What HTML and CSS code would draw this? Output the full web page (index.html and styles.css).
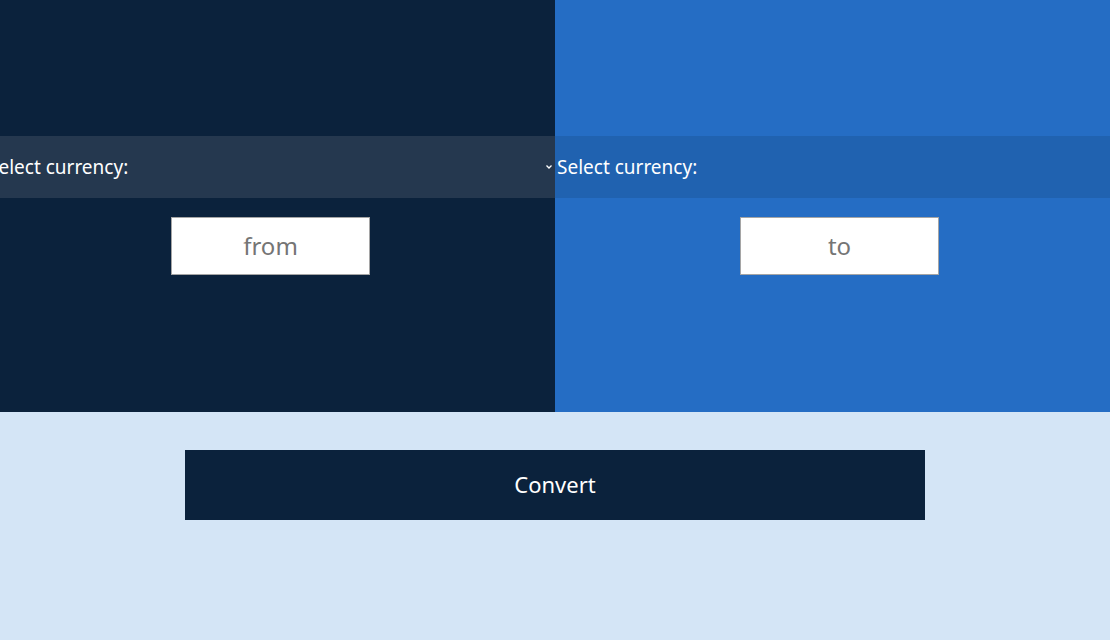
FILE: index.html
```html
<!DOCTYPE html>
<html lang="en">
<head>
  <meta charset="utf-8">
  <title>Currency converter</title>
  <link rel="stylesheet" href="styles.css">
</head>
<body>
  <form class="converter">
    <div class="panels">
      <section class="panel panel-from">
        <div class="field field-from">
          <select class="currency" aria-label="Source currency">
            <option>Select currency:</option>
          </select>
          <svg class="chevron" viewBox="0 0 6 4" aria-hidden="true"><path d="M.5.5 3 3 5.5.5"/></svg>
        </div>
        <input class="amount" type="text" placeholder="from" aria-label="Amount from">
      </section>
      <section class="panel panel-to">
        <div class="field field-to">
          <select class="currency" aria-label="Target currency">
            <option>Select currency:</option>
          </select>
          <svg class="chevron" viewBox="0 0 6 4" aria-hidden="true"><path d="M.5.5 3 3 5.5.5"/></svg>
        </div>
        <input class="amount" type="text" placeholder="to" aria-label="Amount to">
      </section>
    </div>
    <div class="actions">
      <button class="convert" type="button">Convert</button>
    </div>
  </form>
</body>
</html>
```
FILE: styles.css
```css
* {
  box-sizing: border-box;
}

body {
  margin: 0;
  background: #d4e5f6;
  font-family: "Trebuchet MS", "Noto Sans", sans-serif;
}

.converter {
  display: flex;
  flex-direction: column;
  min-height: 100vh;
}

.panels {
  display: flex;
  justify-content: center;
  min-height: 412px;
  overflow: hidden;
}

.panel {
  display: flex;
  flex: 0 0 calc(50% + 14px);
  flex-direction: column;
  align-items: center;
  justify-content: center;
  gap: 19px;
  padding-bottom: 2px;
}

.panel-from {
  background: #0b223c;
}

.panel-to {
  background: #256dc4;
}

.field {
  position: relative;
  width: 100%;
}

.field-from {
  background: #25384f;
}

.field-to {
  background: #2062b0;
}

.currency {
  display: block;
  width: 100%;
  height: 62px;
  padding: 0 2px;
  border: 0;
  border-radius: 0;
  appearance: none;
  background: transparent;
  color: #fff;
  font-family: inherit;
  font-size: 19px;
}

.chevron {
  position: absolute;
  top: calc(50% - 2px);
  right: 3px;
  width: 6px;
  height: 4px;
  overflow: visible;
  fill: none;
  stroke: #fff;
  stroke-width: 1.3;
  pointer-events: none;
}

.amount {
  width: 199px;
  padding: 12px;
  border: 1px solid #a5a5a5;
  background: #fff;
  color: #0b223c;
  font-family: "Noto Sans", sans-serif;
  font-size: 24px;
  line-height: 32px;
  text-align: center;
}

.amount::placeholder {
  color: #757575;
}

.actions {
  display: flex;
  justify-content: center;
  padding: 38px 0;
}

.convert {
  width: calc(100% * 2 / 3);
  padding: 18px 20px 20px;
  border: 0;
  background: #0b223c;
  color: #fff;
  font-family: inherit;
  font-size: 22px;
  line-height: 32px;
}
```
